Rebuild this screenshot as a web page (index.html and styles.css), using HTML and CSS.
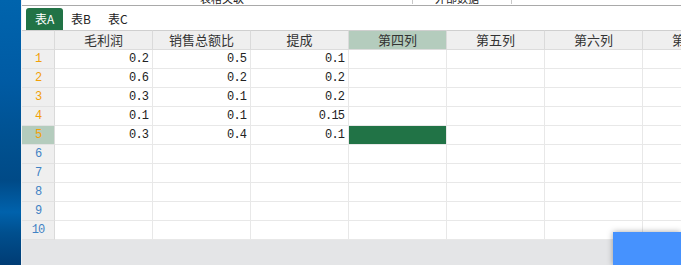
FILE: index.html
```html
<!DOCTYPE html>
<html lang="zh">
<head>
<meta charset="utf-8">
<link rel="stylesheet" href="styles.css">
</head>
<body>
<div class="desk"></div>
<div class="app">
  <div class="topbar">
    <span class="tb tb1">表格关联</span>
    <span class="sep sep1"></span>
    <span class="tb tb2">外部数据</span>
    <span class="sep sep2"></span>
  </div>
  <div class="tabs">
    <span class="tab active">表A</span>
    <span class="tab">表B</span>
    <span class="tab">表C</span>
  </div>
  <div class="grid">
    <div class="hc corner"></div>
    <div class="hc">毛利润</div>
    <div class="hc">销售总额比</div>
    <div class="hc">提成</div>
    <div class="hc hsel">第四列</div>
    <div class="hc">第五列</div>
    <div class="hc">第六列</div>
    <div class="hc">第七列</div>

    <div class="rh orange">1</div><div class="c">0.2</div><div class="c">0.5</div><div class="c">0.1</div><div class="c"></div><div class="c"></div><div class="c"></div><div class="c"></div>
    <div class="rh orange">2</div><div class="c">0.6</div><div class="c">0.2</div><div class="c">0.2</div><div class="c"></div><div class="c"></div><div class="c"></div><div class="c"></div>
    <div class="rh orange">3</div><div class="c">0.3</div><div class="c">0.1</div><div class="c">0.2</div><div class="c"></div><div class="c"></div><div class="c"></div><div class="c"></div>
    <div class="rh orange">4</div><div class="c">0.1</div><div class="c">0.1</div><div class="c">0.15</div><div class="c"></div><div class="c"></div><div class="c"></div><div class="c"></div>
    <div class="rh orange rsel">5</div><div class="c">0.3</div><div class="c">0.4</div><div class="c">0.1</div><div class="c csel"></div><div class="c"></div><div class="c"></div><div class="c"></div>
    <div class="rh blue">6</div><div class="c"></div><div class="c"></div><div class="c"></div><div class="c"></div><div class="c"></div><div class="c"></div><div class="c"></div>
    <div class="rh blue">7</div><div class="c"></div><div class="c"></div><div class="c"></div><div class="c"></div><div class="c"></div><div class="c"></div><div class="c"></div>
    <div class="rh blue">8</div><div class="c"></div><div class="c"></div><div class="c"></div><div class="c"></div><div class="c"></div><div class="c"></div><div class="c"></div>
    <div class="rh blue">9</div><div class="c"></div><div class="c"></div><div class="c"></div><div class="c"></div><div class="c"></div><div class="c"></div><div class="c"></div>
    <div class="rh blue">10</div><div class="c"></div><div class="c"></div><div class="c"></div><div class="c"></div><div class="c"></div><div class="c"></div><div class="c"></div>
  </div>
  <div class="footer"></div>
</div>
<div class="fab"></div>
</body>
</html>
```

FILE: styles.css
```css
* { box-sizing: border-box; }
html, body { margin: 0; padding: 0; }
body {
  width: 681px;
  height: 265px;
  overflow: hidden;
  display: flex;
  font-family: "Noto Sans CJK SC", "Noto Sans", sans-serif;
  background: #fff;
}
.desk {
  width: 21px;
  flex: none;
  background: linear-gradient(180deg, #0064ad 0%, #005ba4 30%, #00508f 55%, #004a87 68%, #0062ac 80%, #004f8e 88%, #003c74 100%);
}
.app {
  flex: 1;
  min-width: 0;
  border-left: 1px solid #eef0f2;
  display: flex;
  flex-direction: column;
  overflow: hidden;
  background: #fff;
}
.topbar {
  height: 6px;
  flex: none;
  border-bottom: 1px solid #a9a9a9;
  display: flex;
  overflow: hidden;
  position: relative;
}
.tb {
  display: block;
  font-size: 11px;
  line-height: 12px;
  margin-top: -8px;
  color: #222;
  white-space: nowrap;
}
.tb1 { margin-left: 178px; }
.sep {
  display: block;
  width: 1px;
  height: 4px;
  background: #c8c8c8;
}
.sep1 { margin-left: 168px; }
.tb2 { margin-left: 22px; }
.sep2 { margin-left: 32px; }
.tabs {
  height: 24px;
  flex: none;
  display: flex;
  align-items: flex-end;
  padding-left: 4px;
}
.tab {
  height: 22px;
  line-height: 22px;
  padding: 0 8px;
  font-size: 12px;
  color: #222;
  border-radius: 3px 3px 0 0;
  width: 37px;
  text-align: left;
}
.tab.active {
  background: #217346;
  color: #fff;
  padding-left: 9px;
}
.grid {
  flex: none;
  display: grid;
  grid-template-columns: 33px repeat(7, 98px);
  grid-auto-rows: 19px;
  grid-template-rows: 20px;
  width: 719px;
}
.hc {
  background: #efefef;
  border-top: 1px solid #cfcfcf;
  border-bottom: 1px solid #dcdcdc;
  border-right: 1px solid #dadada;
  font-size: 13px;
  line-height: 17px;
  text-align: center;
  color: #333;
  white-space: nowrap;
  overflow: hidden;
}
.hc.hsel { background: #b4ccbd; }
.rh {
  background: #efefef;
  border-right: 1px solid #dadada;
  border-bottom: 1px solid #e2e2e2;
  font-family: "Liberation Mono", "DejaVu Sans Mono", monospace;
  font-size: 12px;
  line-height: 18px;
  text-align: center;
  letter-spacing: -1px;
}
.rh.orange { color: #f2a007; }
.rh.blue { color: #3f82c4; }
.rh.rsel { background: #b4ccbd; }
.c {
  border-right: 1px solid #e8e8e8;
  border-bottom: 1px solid #e8e8e8;
  font-family: "Liberation Mono", "DejaVu Sans Mono", monospace;
  font-size: 12px;
  line-height: 18px;
  text-align: right;
  padding-right: 4px;
  color: #222;
  letter-spacing: -0.9px;
}
.c.csel { background: #217346; }
.footer {
  flex: 1;
  background: #e4e5e7;
}
.fab {
  position: fixed;
  right: 0;
  bottom: 0;
  width: 68px;
  height: 33px;
  background: #4692fe;
  box-shadow: 0 0 6px rgba(0, 0, 0, 0.35);
}
```
